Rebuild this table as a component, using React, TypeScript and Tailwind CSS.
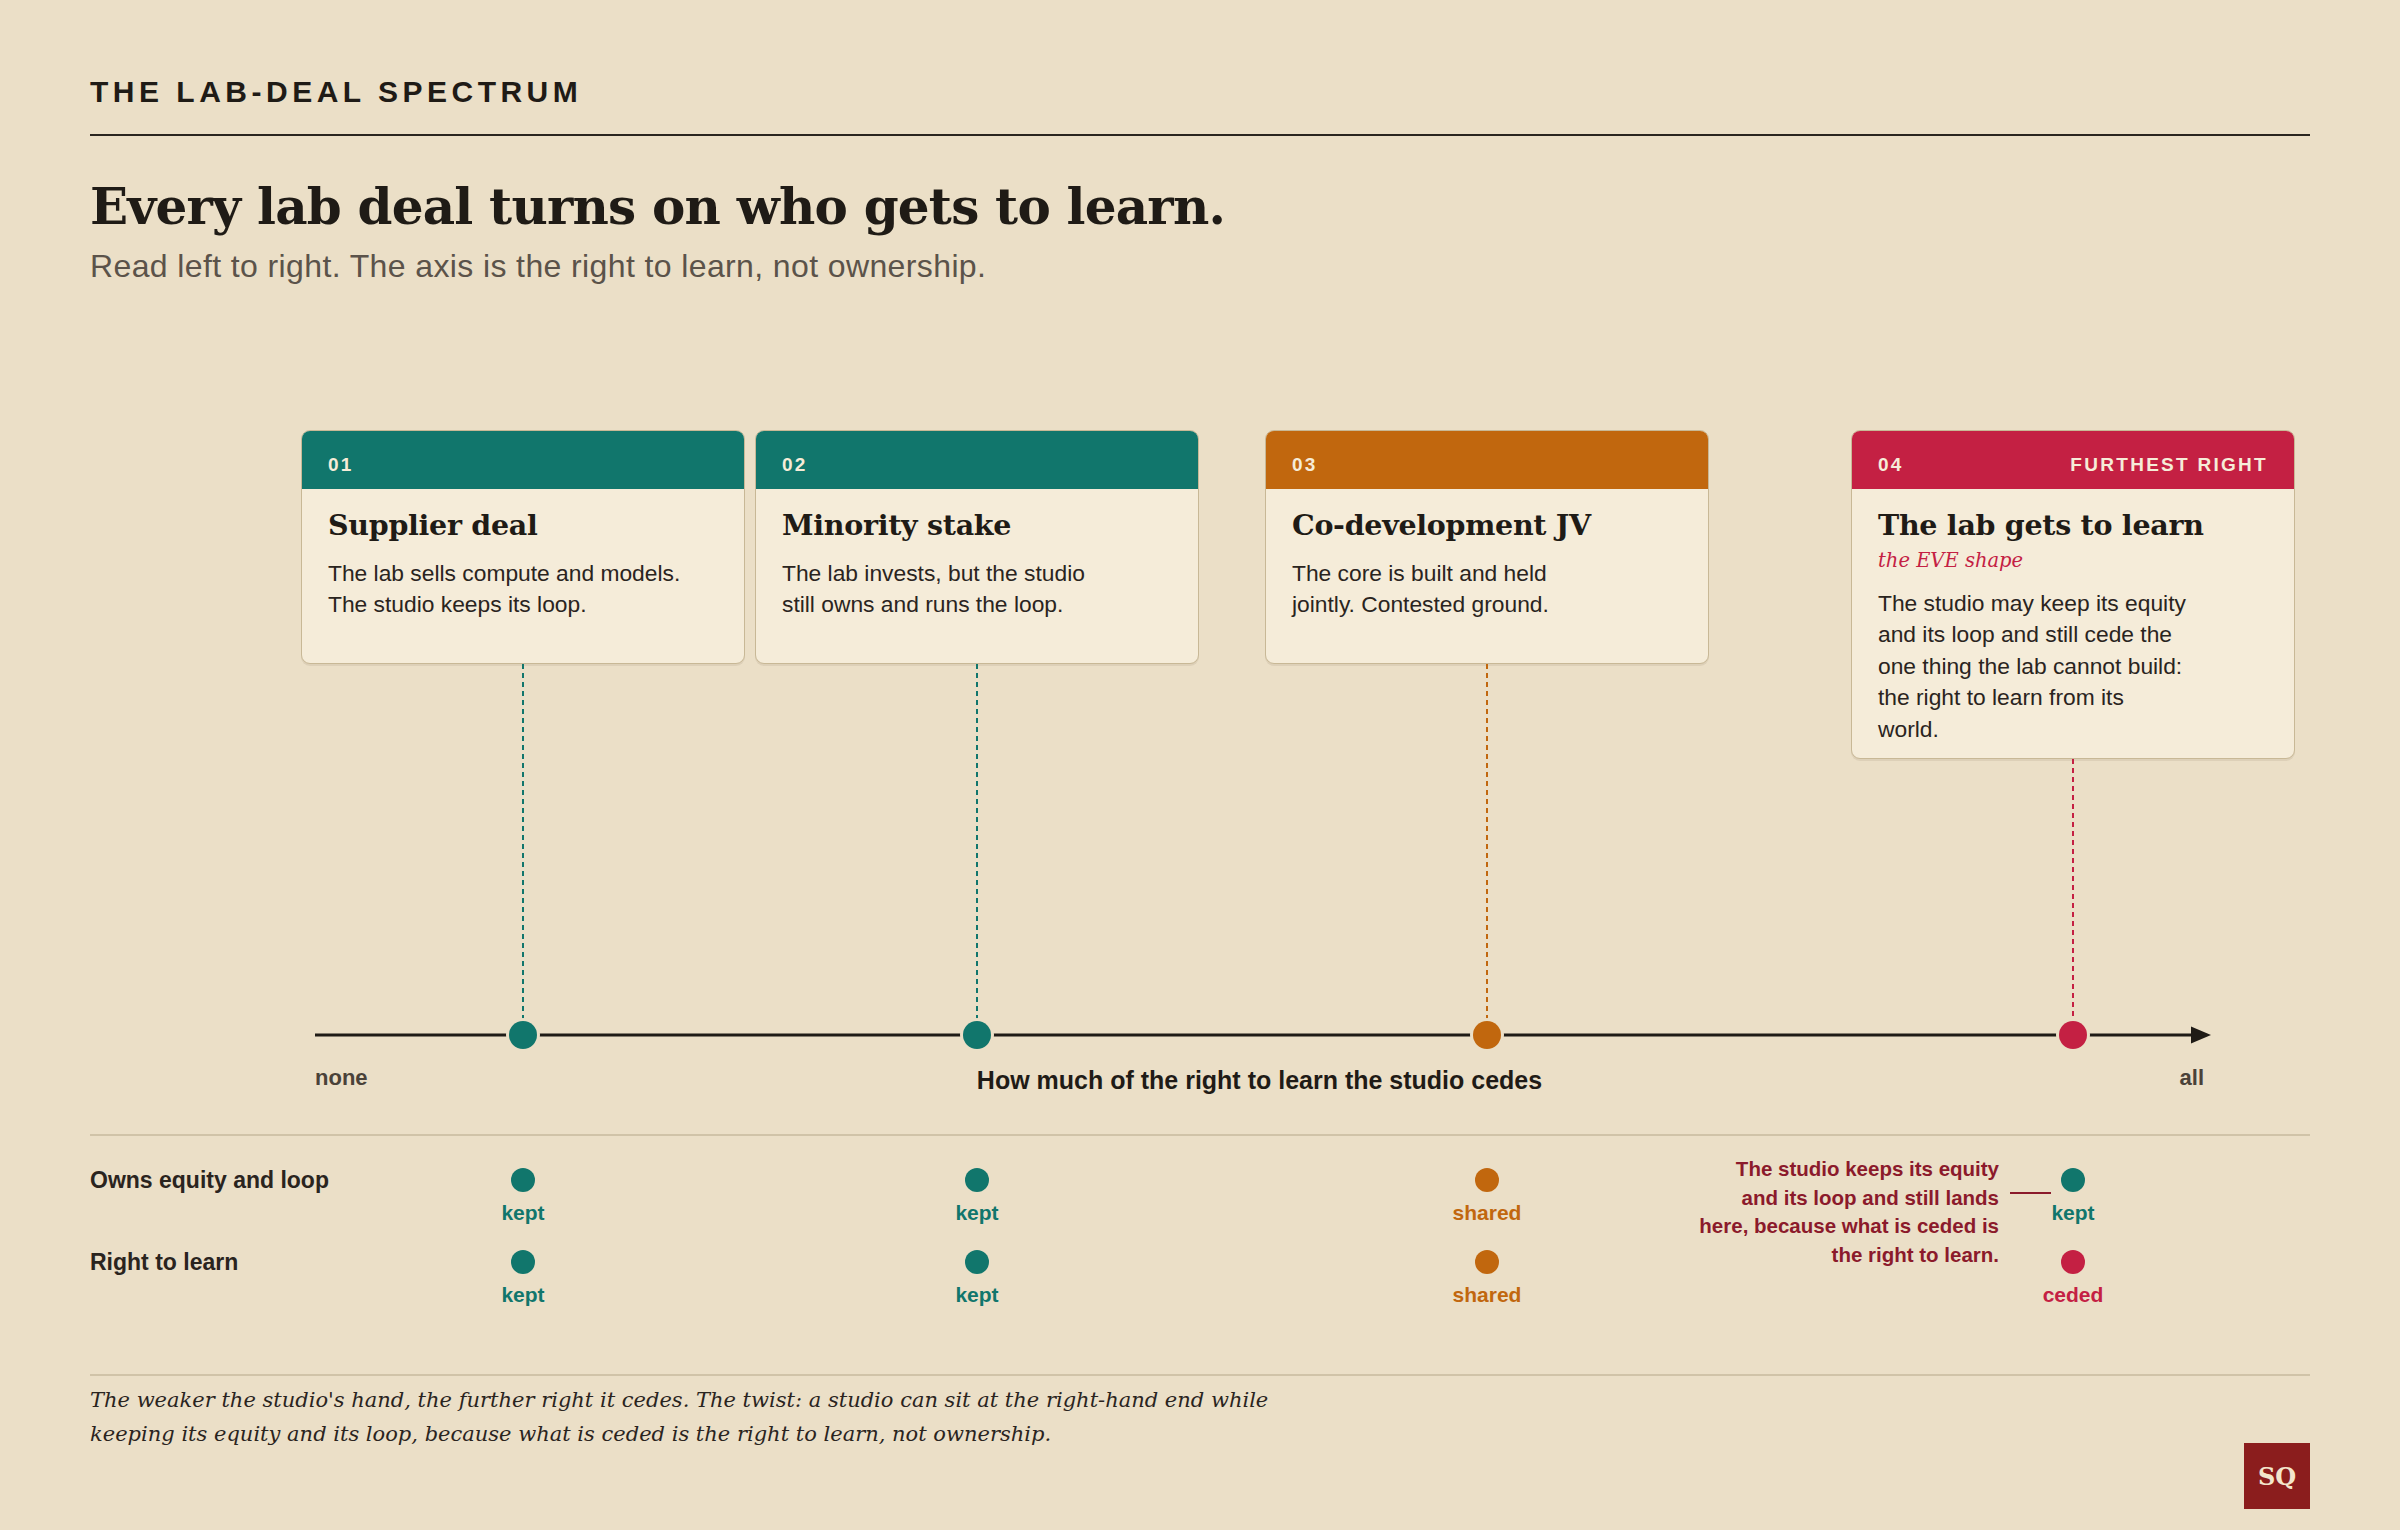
import React from 'react';

type Deal = {
    num: string;
    tag?: string;
    title: string;
    sub?: string;
    lines: string[];
    head: string;
    leader: string;
    dot: string;
    col: string;
};

const deals: Deal[] = [
    {
        num: '01',
        title: 'Supplier deal',
        lines: ['The lab sells compute and models.', 'The studio keeps its loop.'],
        head: 'bg-[#11766c]',
        leader: 'bg-[repeating-linear-gradient(to_bottom,#11766c_0_5px,transparent_5px_9px)]',
        dot: 'bg-[#11766c]',
        col: 'ml-[211px]',
    },
    {
        num: '02',
        title: 'Minority stake',
        lines: ['The lab invests, but the studio', 'still owns and runs the loop.'],
        head: 'bg-[#11766c]',
        leader: 'bg-[repeating-linear-gradient(to_bottom,#11766c_0_5px,transparent_5px_9px)]',
        dot: 'bg-[#11766c]',
        col: 'ml-[10px]',
    },
    {
        num: '03',
        title: 'Co-development JV',
        lines: ['The core is built and held', 'jointly. Contested ground.'],
        head: 'bg-[#c1670e]',
        leader: 'bg-[repeating-linear-gradient(to_bottom,#c1670e_0_5px,transparent_5px_9px)]',
        dot: 'bg-[#c1670e]',
        col: 'ml-[66px]',
    },
    {
        num: '04',
        tag: 'FURTHEST RIGHT',
        title: 'The lab gets to learn',
        sub: 'the EVE shape',
        lines: [
            'The studio may keep its equity',
            'and its loop and still cede the',
            'one thing the lab cannot build:',
            'the right to learn from its',
            'world.',
        ],
        head: 'bg-[#c42043]',
        leader: 'bg-[repeating-linear-gradient(to_bottom,#c42043_0_5px,transparent_5px_9px)]',
        dot: 'bg-[#c42043]',
        col: 'ml-[142px]',
    },
];

type Cell = { label: string; dot: string; text: string };

const kept: Cell = { label: 'kept', dot: 'bg-[#11766c]', text: 'text-[#11766c]' };
const shared: Cell = { label: 'shared', dot: 'bg-[#c1670e]', text: 'text-[#c1670e]' };
const ceded: Cell = { label: 'ceded', dot: 'bg-[#c42043]', text: 'text-[#c42043]' };

const rows: { label: string; cells: Cell[] }[] = [
    { label: 'Owns equity and loop', cells: [kept, kept, shared, kept] },
    { label: 'Right to learn', cells: [kept, kept, shared, ceded] },
];

const cellCols = ['', 'ml-[10px]', 'ml-[66px]', 'ml-[142px]'];

function DealCard({ d }: { d: Deal }) {
    return (
        <div className="w-full min-h-[234px] overflow-hidden rounded-[9px] border border-[#c8b896] bg-[#f5ecd9] shadow-[0_2px_0_rgba(60,40,10,0.08)]">
            <div className={`flex h-[58px] items-center justify-between px-[26px] pt-[10px] text-[19px] font-bold tracking-[0.12em] text-[#f6ecd8] ${d.head}`}>
                <span>{d.num}</span>
                {d.tag && <span>{d.tag}</span>}
            </div>
            <div className="px-[26px] pt-[15.5px] pb-[13px]">
                <h3 className="font-['DejaVu_Serif',serif] text-[28.5px] leading-[40px] font-bold tracking-[-0.01em] text-[#1f1b16]">
                    {d.title}
                </h3>
                {d.sub && (
                    <div className="mt-[2px] font-['DejaVu_Serif',serif] text-[19.5px] leading-[28px] italic text-[#c42043]">
                        {d.sub}
                    </div>
                )}
                <p className={`${d.sub ? 'mt-[13px]' : 'mt-[13px]'} whitespace-nowrap text-[22.8px] leading-[31.5px] text-[#2a241e]`}>
                    {d.lines.map((l, i) => (
                        <span key={i} className="block">{l}</span>
                    ))}
                </p>
            </div>
        </div>
    );
}

export default function App() {
    return (
        <div className="min-h-[1530px] w-full bg-[#ebdfc7] px-[90px] pt-[74px] pb-[21px] font-['Liberation_Sans',Arial,sans-serif] text-[#1f1b16]">
            <div className="text-[30px] leading-[36px] font-bold tracking-[0.15em]">THE LAB-DEAL SPECTRUM</div>
            <div className="mt-[24px] h-[2px] bg-[#2a251f]" />

            <h1 className="mt-[46px] font-['DejaVu_Serif',serif] text-[50px] leading-[50px] font-bold tracking-[-0.016em]">
                Every lab deal turns on who gets to learn.
            </h1>
            <p className="mt-[15px] text-[32px] leading-[38px] tracking-[0.012em] text-[#5b534a]">
                Read left to right. The axis is the right to learn, not ownership.
            </p>

            {/* spectrum: cards hang over their point on the axis */}
            <div className="relative mt-[145px]">
                <svg
                    className="absolute left-[225px] top-[595px]"
                    width="1896"
                    height="20"
                    viewBox="0 0 1896 20"
                >
                    <line x1="0" y1="10" x2="1880" y2="10" stroke="#1f1b16" strokeWidth="3" />
                    <polygon points="1876,1.5 1896,10 1876,18.5" fill="#1f1b16" />
                </svg>
                <div className="flex h-[619px]">
                    {deals.map((d) => (
                        <div key={d.num} className={`${d.col} flex w-[444px] shrink-0 flex-col items-center`}>
                            <DealCard d={d} />
                            <div className={`w-[2px] flex-1 ${d.leader}`} />
                            <div className={`relative z-10 size-[28px] rounded-full ring-[3px] ring-[#ebdfc7] ${d.dot}`} />
                        </div>
                    ))}
                </div>
            </div>

            <div className="mt-[16px] grid grid-cols-[1fr_auto_1fr] items-baseline pl-[225px] pr-[106px]">
                <span className="relative -top-[4px] text-[22px] font-bold text-[#4a4239]">none</span>
                <span className="text-[25px] leading-[30px] font-semibold">
                    How much of the right to learn the studio cedes
                </span>
                <span className="relative -top-[4px] text-right text-[22px] font-bold text-[#4a4239]">all</span>
            </div>

            <div className="relative mt-[36px] border-t-2 border-[#d0c3a8] pt-[31.5px] pb-[67.5px]">
                <div className="flex flex-col gap-[25px]">
                    {rows.map((r) => (
                        <div key={r.label} className="flex">
                            <div className="w-[211px] shrink-0 whitespace-nowrap text-[23px] leading-[24px] font-semibold text-[#2a241e]">
                                {r.label}
                            </div>
                            {r.cells.map((c, i) => (
                                <div key={i} className={`${cellCols[i]} flex w-[444px] shrink-0 flex-col items-center`}>
                                    <div className={`size-[24px] rounded-full ${c.dot}`} />
                                    <div className={`mt-[9px] text-[21px] leading-[24px] font-bold ${c.text}`}>{c.label}</div>
                                </div>
                            ))}
                        </div>
                    ))}
                </div>

                <div className="absolute right-[311px] top-[19px] whitespace-nowrap text-right text-[20.5px] leading-[28.5px] font-bold text-[#8b1a2b]">
                    The studio keeps its equity
                    <br />
                    and its loop and still lands
                    <br />
                    here, because what is ceded is
                    <br />
                    the right to learn.
                </div>
                <div className="absolute right-[259px] top-[56px] h-[2px] w-[41px] bg-[#8b1a2b]" />
            </div>

            <div className="flex justify-between border-t-2 border-[#d0c3a8] pt-[7px]">
                <p className="whitespace-nowrap font-['DejaVu_Serif',serif] text-[21px] leading-[34px] italic text-[#2a241e]">
                    The weaker the studio's hand, the further right it cedes. The twist: a studio can sit at the right-hand end while
                    <br />
                    keeping its equity and its loop, because what is ceded is the right to learn, not ownership.
                </p>
                <div className="mt-[60px] flex size-[66px] shrink-0 items-center justify-center bg-[#8b1d1d] pt-[2px] font-['DejaVu_Serif',serif] text-[24px] font-bold text-[#f3e6cc]">
                    SQ
                </div>
            </div>
        </div>
    );
}
